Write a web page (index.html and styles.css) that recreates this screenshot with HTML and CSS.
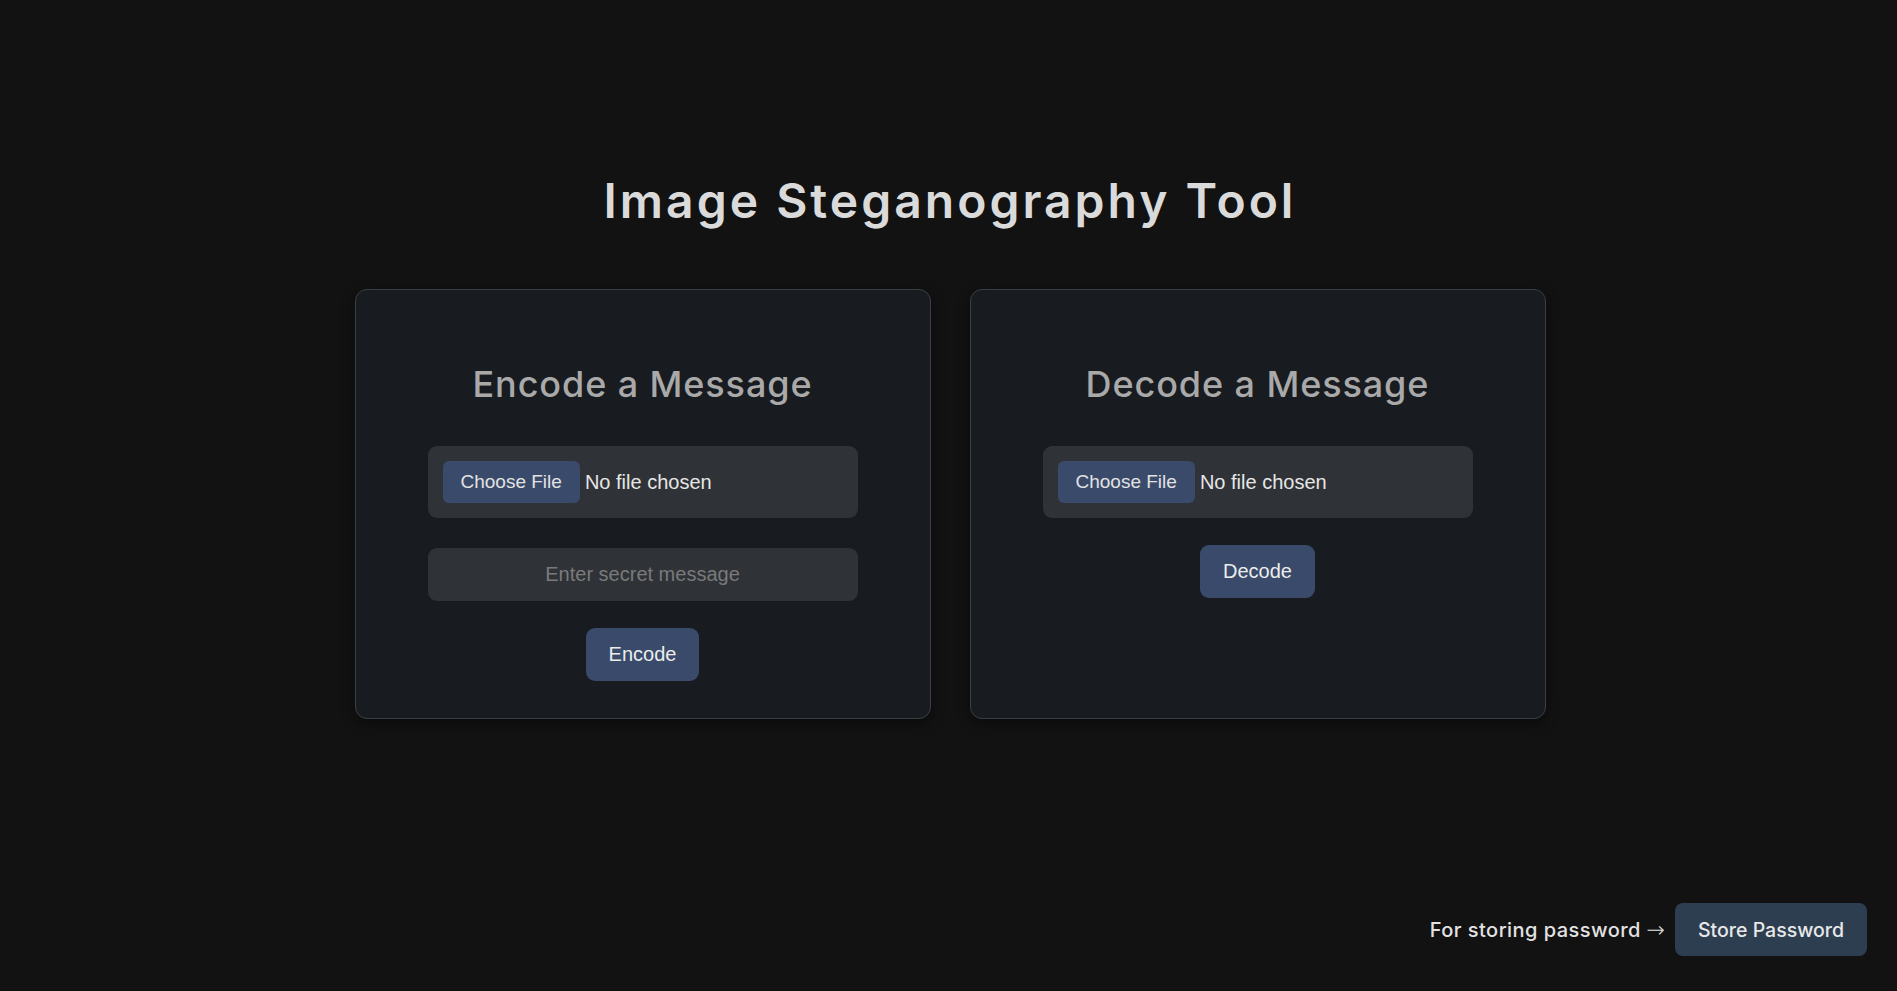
FILE: index.html
```html
<!DOCTYPE html>
<html lang="en">
<head>
<meta charset="utf-8">
<title>Image Steganography Tool</title>
<link rel="stylesheet" href="styles.css">
</head>
<body>
  <main class="page">
    <h1 class="title">Image Steganography Tool</h1>
    <div class="cards">
      <section class="card">
        <h2 class="card-title">Encode a Message</h2>
        <div class="file-field">
          <span class="file-btn">Choose File</span>
          <span class="file-name">No file chosen</span>
        </div>
        <input class="text-field" type="text" placeholder="Enter secret message">
        <button class="action-btn" type="button">Encode</button>
      </section>
      <section class="card">
        <h2 class="card-title">Decode a Message</h2>
        <div class="file-field">
          <span class="file-btn">Choose File</span>
          <span class="file-name">No file chosen</span>
        </div>
        <button class="action-btn" type="button">Decode</button>
      </section>
    </div>
  </main>
  <footer class="footer">
    <span class="footer-text">For storing password <span class="arrow">→</span></span>
    <button class="store-btn" type="button">Store Password</button>
  </footer>
</body>
</html>
```

FILE: styles.css
```css
* { box-sizing: border-box; }

html, body {
  margin: 0;
  padding: 0;
}

body {
  background: #121212;
  color: #e0e0e0;
  font-family: "Inter", "Noto Sans", sans-serif;
  min-height: 100vh;
  display: flex;
  flex-direction: column;
}

.page {
  display: flex;
  flex-direction: column;
  align-items: center;
  padding: 173px 0 0 3px;
}

.title {
  margin: 0;
  font-size: 48px;
  line-height: 56px;
  font-weight: 600;
  color: #dadada;
  letter-spacing: 3px;
}

.cards {
  display: flex;
  gap: 39px;
  margin-top: 60px;
  align-items: stretch;
}

.card {
  width: 576px;
  background: #181c20;
  border: 1px solid #3b3f45;
  border-radius: 12px;
  box-shadow: 0 4px 14px rgba(0, 0, 0, 0.45);
  padding: 40px 40px 37px;
  display: flex;
  flex-direction: column;
  align-items: center;
}

.card-title {
  margin: 32px 0 25px;
  font-size: 36px;
  line-height: 44px;
  font-weight: 500;
  color: #a9a9a9;
  letter-spacing: 0.9px;
}

.file-field {
  width: 430px;
  margin: 15px 0;
  padding: 15px;
  background: #2f3237;
  border-radius: 9px;
  display: flex;
  align-items: center;
  gap: 5px;
  font-family: "Liberation Sans", Arial, sans-serif;
}

.file-btn {
  height: 42px;
  padding: 0 18px;
  display: flex;
  align-items: center;
  background: #394a6a;
  color: #e2e2e2;
  border-radius: 6px;
  font-size: 19px;
}

.file-name {
  font-size: 20px;
  color: #e6e6e6;
}

.text-field {
  width: 430px;
  margin: 15px 0;
  padding: 15px;
  border: none;
  outline: none;
  background: #2f3237;
  border-radius: 9px;
  font-family: "Liberation Sans", Arial, sans-serif;
  font-size: 20px;
  line-height: 23px;
  color: #e6e6e6;
  text-align: center;
}

.text-field::placeholder {
  color: #7a7a7a;
}

.action-btn {
  margin-top: 12px;
  padding: 15px 23px;
  border: none;
  border-radius: 9px;
  background: #394a6a;
  color: #ececec;
  font-family: "Liberation Sans", Arial, sans-serif;
  font-size: 20px;
  line-height: 23px;
  cursor: pointer;
}

.footer {
  margin-top: auto;
  align-self: flex-end;
  display: flex;
  align-items: center;
  gap: 10px;
  padding: 0 30px 35px 0;
}

.footer-text {
  font-size: 20px;
  font-weight: 500;
  color: #e2e2e2;
  letter-spacing: 0.45px;
}

.arrow {
  font-family: "DejaVu Sans", sans-serif;
  font-weight: 300;
  font-size: 22px;
  letter-spacing: 0;
}

.store-btn {
  height: 53px;
  padding: 0 23px;
  border: none;
  border-radius: 8px;
  background: #2d3e51;
  color: #e8e8e8;
  font-family: "Inter", "Noto Sans", sans-serif;
  font-size: 19.5px;
  font-weight: 500;
  cursor: pointer;
}
```
